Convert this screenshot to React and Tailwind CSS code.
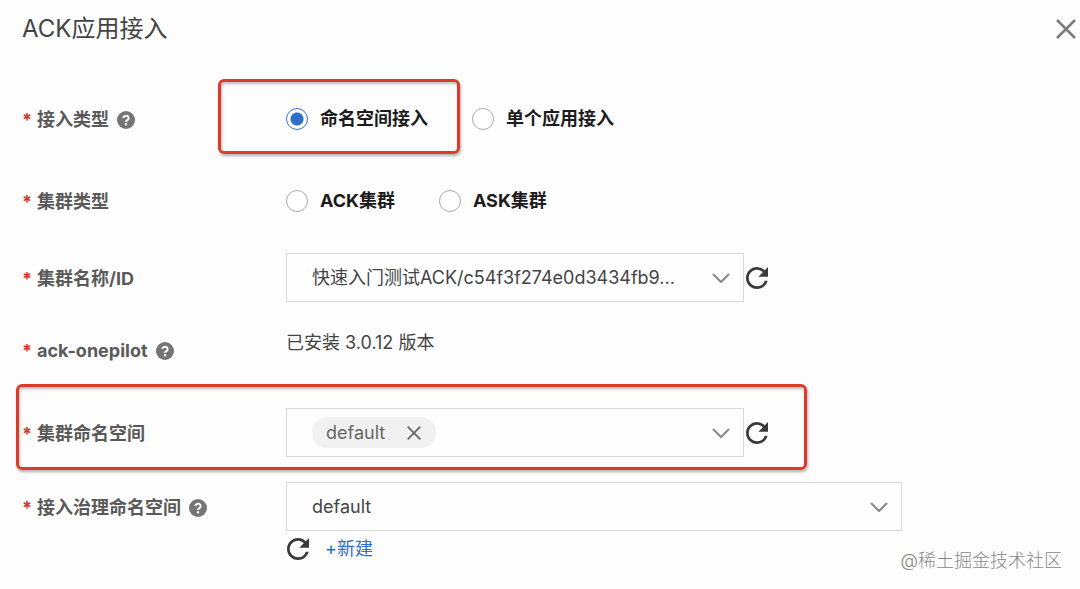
import { useState } from 'react'

function HelpIcon({ label }) {
  return (
    <svg viewBox="0 0 18 18" className="ml-2 size-[18px] shrink-0" role="img" aria-label={label}>
      <circle cx="9" cy="9" r="9" fill="#757575" />
      <path d="M6.4 7.1a2.6 2.4 0 1 1 4 2c-.9.6-1.4 1-1.4 1.9" fill="none" stroke="#fff" strokeWidth="2" />
      <rect x="7.9" y="12.2" width="2.2" height="2.1" fill="#fff" />
    </svg>
  )
}

function RefreshButton() {
  return (
    <button type="button" aria-label="刷新" className="shrink-0 text-[#3a3a3a]">
      <svg viewBox="4 4 16 16" className="size-[22px]" fill="currentColor" aria-hidden="true">
        <path d="M17.65 6.35A7.96 7.96 0 0 0 12 4c-4.42 0-7.99 3.58-7.99 8s3.57 8 7.99 8c3.73 0 6.84-2.55 7.73-6h-2.08A5.99 5.99 0 0 1 12 18c-3.31 0-6-2.69-6-6s2.69-6 6-6c1.66 0 3.14.69 4.22 1.78L13 11h7V4z" />
      </svg>
    </button>
  )
}

function Chevron() {
  return (
    <svg viewBox="0 0 18 10" className="h-[10px] w-[18px]" fill="none" stroke="#8c8c8c" strokeWidth="2.2" aria-hidden="true">
      <path d="M1 1l8 8 8-8" />
    </svg>
  )
}

function Cross({ className }) {
  return (
    <svg viewBox="0 0 20 20" className={className} fill="none" stroke="currentColor" aria-hidden="true">
      <path d="M1 1l18 18M19 1L1 19" />
    </svg>
  )
}

function Label({ htmlFor, id, help, children }) {
  return (
    <div className="flex w-[264px] shrink-0 items-center pt-[2px] font-bold text-[#5a5a5a]">
      <span className="w-[15px] text-[#d0392b]" aria-hidden="true">*</span>
      <label htmlFor={htmlFor} id={id}>{children}</label>
      {help && <HelpIcon label={help} />}
    </div>
  )
}

function Radio({ name, value, checked, onChange, children }) {
  return (
    <label className="flex items-center gap-3 font-bold text-[#1c1c1c]">
      <input
        type="radio"
        name={name}
        value={value}
        checked={checked}
        onChange={() => onChange(value)}
        className="size-[22px] appearance-none rounded-full border border-[#aaa] bg-white checked:border-[#3474ce] checked:bg-[radial-gradient(circle,#2e6fc9_6px,#fff_7px)]"
      />
      {children}
    </label>
  )
}

function Select({ id, options, className }) {
  return (
    <div className={className}>
      <select id={id} className="h-[49px] w-full appearance-none border border-[#d9d9d9] bg-[#fefefe] pr-12 pl-[25px] text-[#444]">
        {options.map((o) => (
          <option key={o}>{o}</option>
        ))}
      </select>
      <span className="pointer-events-none absolute inset-y-0 right-[14px] flex items-center">
        <Chevron />
      </span>
    </div>
  )
}

export default function App() {
  const [access, setAccess] = useState('namespace')
  const [cluster, setCluster] = useState('')
  const [tags, setTags] = useState(['default'])

  return (
    <main className="relative min-h-screen bg-[#fdfdfd] pb-6 font-['Inter','Noto_Sans_CJK_SC',sans-serif] text-[18px] leading-6 text-[#444]">
      <header className="flex h-[58px] items-center justify-between pr-[4px] pl-[22px]">
        <h1 className="text-[24px] leading-8">ACK应用接入</h1>
        <button type="button" aria-label="关闭" className="text-[#7c7c7c]">
          <Cross className="size-5 stroke-[2.5]" />
        </button>
      </header>

      <form className="pt-[21px] pl-4">
        <div className="relative flex h-[80px] items-center pl-[6px]">
          <Label id="access-label" help="接入类型说明">接入类型</Label>
          <div role="radiogroup" aria-labelledby="access-label" className="flex gap-11">
            <Radio name="access" value="namespace" checked={access === 'namespace'} onChange={setAccess}>命名空间接入</Radio>
            <Radio name="access" value="single" checked={access === 'single'} onChange={setAccess}>单个应用接入</Radio>
          </div>
          {/* highlight frame */}
          <div className="pointer-events-none absolute top-0 left-[202px] h-[75px] w-[242px] rounded-md border-3 border-[#dc3a2b] shadow-[1px_2px_3px_rgba(0,0,0,0.3),inset_1px_2px_3px_rgba(0,0,0,0.25)]" />
        </div>

        <div className="flex h-[84px] items-center pl-[6px]">
          <Label id="cluster-label">集群类型</Label>
          <div role="radiogroup" aria-labelledby="cluster-label" className="flex gap-11">
            <Radio name="cluster" value="ack" checked={cluster === 'ack'} onChange={setCluster}>ACK集群</Radio>
            <Radio name="cluster" value="ask" checked={cluster === 'ask'} onChange={setCluster}>ASK集群</Radio>
          </div>
        </div>

        <div className="flex items-center pt-[10px] pl-[6px]">
          <Label htmlFor="cluster-name">集群名称/ID</Label>
          <Select id="cluster-name" className="relative mr-[2px] w-full max-w-[458px]" options={['快速入门测试ACK/c54f3f274e0d3434fb9...']} />
          <RefreshButton />
        </div>

        <div className="flex h-[82px] items-center pl-[6px]">
          <div className="pt-[14px]">
            <Label help="ack-onepilot 说明">ack-onepilot</Label>
          </div>
          <p>已安装 3.0.12 版本</p>
        </div>

        <div className="flex w-full max-w-[791px] items-center rounded-md border-3 border-[#dc3a2b] pt-[21px] pb-[10px] pl-[3px] shadow-[1px_2px_3px_rgba(0,0,0,0.3),inset_1px_2px_3px_rgba(0,0,0,0.25)]">
          <Label id="ns-label">集群命名空间</Label>
          <div role="group" aria-labelledby="ns-label" className="mr-[2px] flex h-[49px] w-full max-w-[458px] items-center justify-between border border-[#d9d9d9] bg-[#fefefe] pr-[13px] pl-[25px]">
            <div className="flex gap-2">
              {tags.map((t) => (
                <span key={t} className="flex h-[31px] items-center gap-[22px] rounded-full bg-[#f1f1f1] pr-[15px] pl-[14px] text-[#666]">
                  {t}
                  <button type="button" aria-label={`移除 ${t}`} onClick={() => setTags(tags.filter((x) => x !== t))}>
                    <Cross className="size-[14px] stroke-[2.5]" />
                  </button>
                </span>
              ))}
            </div>
            <button type="button" aria-label="展开命名空间">
              <Chevron />
            </button>
          </div>
          <RefreshButton />
        </div>

        <div className="flex items-center pt-[12px] pl-[6px]">
          <Label htmlFor="govern-ns" help="接入治理命名空间说明">接入治理命名空间</Label>
          <Select id="govern-ns" className="relative w-full max-w-[616px]" options={['default']} />
        </div>
        <div className="flex items-center gap-4 pt-[6px] pl-[271px]">
          <RefreshButton />
          <a href="#new" className="text-[#2e6fc9]">+新建</a>
        </div>
      </form>

      <p className="absolute right-[18px] bottom-[16px] font-light text-[#888]">@稀土掘金技术社区</p>
    </main>
  )
}
